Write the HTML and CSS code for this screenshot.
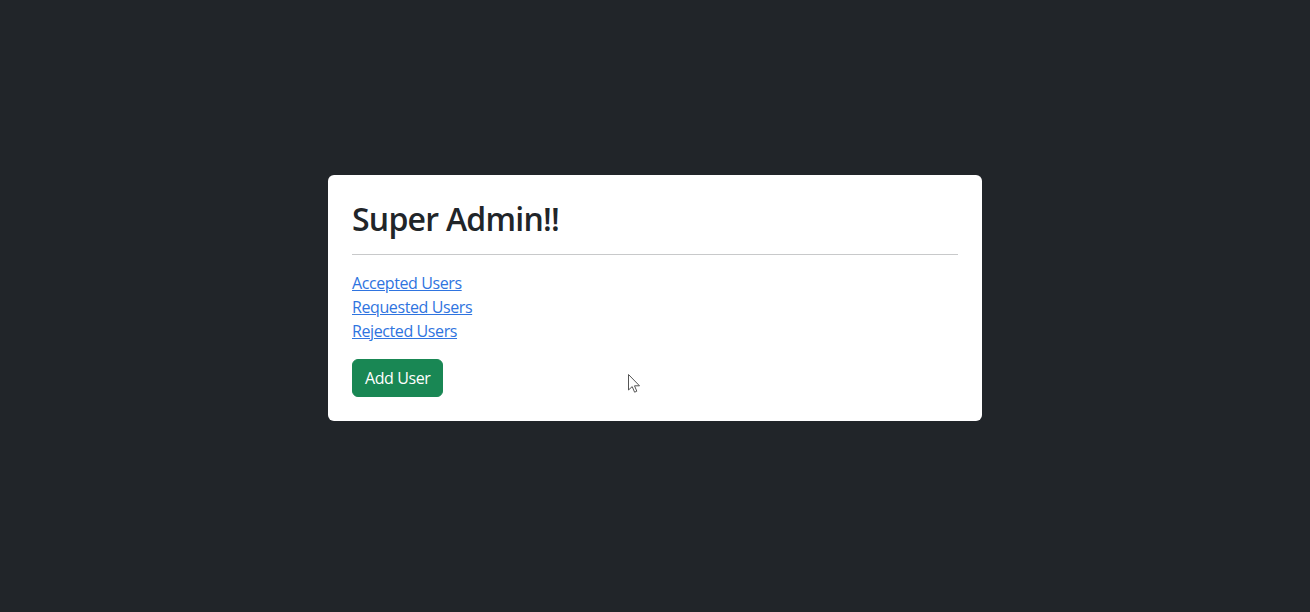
FILE: index.html
```html
<!DOCTYPE html>
<html lang="en">
<head>
<meta charset="utf-8">
<title>Super Admin</title>
<link rel="stylesheet" href="styles.css">
</head>
<body>
<main class="page">
  <section class="card">
    <h2 class="title">Super Admin!!</h2>
    <hr class="divider">
    <nav class="links">
      <a href="#">Accepted Users</a>
      <a href="#">Requested Users</a>
      <a href="#">Rejected Users</a>
    </nav>
    <button class="btn-add" type="button">Add User</button>
  </section>
</main>
<svg class="cursor" width="13" height="20" viewBox="0 0 13 20"><path d="M0.5 0.5 L0.5 16 L4.2 12.6 L6.6 18.2 L8.8 17.2 L6.5 11.8 L11.5 11.8 Z" fill="#fff" stroke="#555" stroke-width="1"/></svg>
</body>
</html>
```
FILE: styles.css
```css
html, body {
  margin: 0;
  padding: 0;
  background: #212529;
  height: 100%;
}
body {
  font-family: "Open Sans", "Noto Sans", sans-serif;
  color: #212529;
  position: relative;
}
.page {
  padding-top: 175px;
  display: flex;
  justify-content: center;
}
.card {
  width: 654px;
  box-sizing: border-box;
  background: #fff;
  border-radius: 6px;
  padding: 24px;
}
.title {
  margin: 0;
  font-size: 32px;
  font-weight: 600;
  line-height: 39px;
  letter-spacing: -0.75px;
  color: #212529;
}
.divider {
  margin: 16px 0;
  border: 0;
  border-top: 1px solid #c8c9ca;
}
.links {
  display: flex;
  flex-direction: column;
  align-items: flex-start;
  margin-bottom: 16px;
}
.links a {
  font-size: 16px;
  line-height: 24px;
  letter-spacing: -0.4px;
  color: #2f74e0;
  text-decoration: underline;
}
.btn-add {
  font-family: inherit;
  font-size: 16px;
  line-height: 24px;
  letter-spacing: -0.4px;
  padding: 6px 12px;
  border: 1px solid #198754;
  border-radius: 6px;
  background: #198754;
  color: #fff;
  cursor: pointer;
}
.cursor {
  position: absolute;
  left: 628px;
  top: 374px;
}
```
